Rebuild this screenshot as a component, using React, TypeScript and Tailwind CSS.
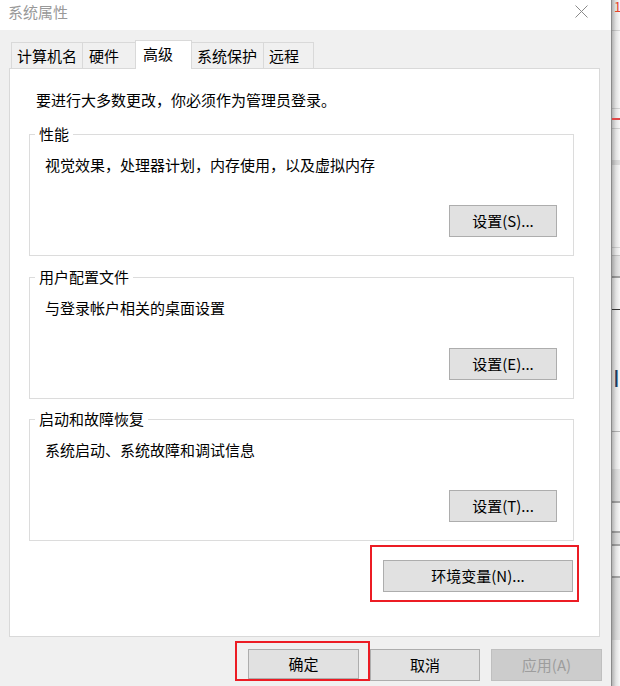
import React from "react";

function Btn({ children, className = "" }: { children: React.ReactNode; className?: string }) {
  return (
    <div
      className={`flex items-center justify-center bg-[#e1e1e1] border border-[#adadad] text-[15px] leading-[20px] text-black ${className}`}
    >
      {children}
    </div>
  );
}

function Group({
  title,
  desc,
  btn,
  className = "",
}: {
  title: string;
  desc: string;
  btn: string;
  className?: string;
}) {
  return (
    <fieldset className={`ml-[19px] w-[545px] border border-[#dcdcdc] ${className}`}>
      <legend className="ml-[5px] px-[4px] leading-[20px]">{title}</legend>
      <div className="mt-[11px] pl-[15px] leading-[20px]">{desc}</div>
      <div className="mt-[30px] mb-[18px] pr-[16px] flex justify-end">
        <Btn className="w-[108px] h-[32px]">{btn}</Btn>
      </div>
    </fieldset>
  );
}

function Tab({
  label,
  className,
}: {
  label: string;
  className: string;
}) {
  return <div className={`flex items-center leading-[20px] ${className}`}>{label}</div>;
}

function BackgroundStrip() {
  return (
    <div className="w-[9px] h-[686px] shrink-0 overflow-hidden border-l border-[#8a8a8a] bg-gradient-to-r from-[#b4b4b4] via-[#e2e2e2] to-[#f7f7f7] flex flex-col">
      <div className="h-[14px] pl-[2px] text-[13px] leading-[14px] text-[#e8432a] font-['Noto_Sans_CJK_SC',sans-serif] whitespace-nowrap">
        1钟
      </div>
      <div className="h-[16px]" />
      <div className="h-px bg-[#00000022]" />
      <div className="h-[77px]" />
      <div className="h-px bg-[#00000022]" />
      <div className="h-[9px]" />
      <div className="h-[2px] bg-[#e04848]" />
      <div className="h-[8px]" />
      <div className="h-px bg-[#00000022]" />
      <div className="h-[31px]" />
      <div className="h-[5px] bg-[#00000018]" />
      <div className="h-[82px]" />
      <div className="h-px bg-[#00000020]" />
      <div className="h-[7px]" />
      <div className="h-px bg-[#00000030]" />
      <div className="h-[20px] bg-[#00000010]" />
      <div className="h-[2px] bg-[#00000055]" />
      <div className="h-[31px]" />
      <div className="h-px bg-[#333333]" />
      <div className="h-[56px]" />
      <div className="h-[26px] pl-[1px] text-[24px] leading-[26px] text-[#1d3b5e] font-['Liberation_Sans',sans-serif] whitespace-nowrap">
        IC
      </div>
      <div className="h-[39px]" />
      <div className="h-px bg-[#00000040]" />
      <div className="h-[37px]" />
      <div className="h-[32px] bg-[#00000012]" />
      <div className="h-[2px] bg-[#00000050]" />
      <div className="h-[28px]" />
      <div className="h-[2px] bg-[#00000050]" />
      <div className="h-[11px] bg-[#00000012]" />
      <div className="h-[2px] bg-[#00000050]" />
      <div className="h-[30px]" />
      <div className="h-[2px] bg-[#00000050]" />
      <div className="h-[62px] bg-[#00000012]" />
    </div>
  );
}

export default function App() {
  return (
    <div className="w-[620px] h-[686px] overflow-hidden flex bg-white font-['Noto_Sans_CJK_SC','Microsoft_YaHei',sans-serif] text-[15px] text-black">
      <div className="w-[611px] h-[686px] shrink-0 flex flex-col bg-[#f0f0f0]">
        {/* Title bar */}
        <div className="h-[30px] bg-white flex items-start justify-between pl-[8px] pr-[23px]">
          <div className="pt-[2px] leading-[20px] text-[#999999]">系统属性</div>
          <svg width="13" height="13" viewBox="0 0 13 13" className="mt-[5px]">
            <path d="M0.5 0.5 L12.5 12.5 M12.5 0.5 L0.5 12.5" stroke="#8a8a8a" strokeWidth="1" fill="none" />
          </svg>
        </div>

        {/* Tabs */}
        <div className="pt-[10px] pl-[11px] h-[38px] flex items-end relative z-10">
          <Tab label="计算机名" className="w-[71px] h-[26px] pl-[5px] border-l border-t border-[#d9d9d9]" />
          <Tab label="硬件" className="w-[53px] h-[26px] pl-[6px] border-l border-t border-[#d9d9d9]" />
          <Tab
            label="高级"
            className="w-[57px] h-[29px] -mb-px pl-[7px] pb-[3px] bg-white border-l border-t border-r border-[#d9d9d9]"
          />
          <Tab label="系统保护" className="w-[71px] h-[26px] pl-[5px] border-t border-[#d9d9d9]" />
          <Tab label="远程" className="w-[51px] h-[26px] pl-[5px] border-l border-t border-r border-[#d9d9d9]" />
        </div>

        {/* Tab panel */}
        <div className="ml-[9px] w-[591px] h-[569px] shrink-0 bg-white border border-[#d9d9d9] flex flex-col">
          <div className="pt-[21px] pl-[26px] leading-[20px]">要进行大多数更改，你必须作为管理员登录。</div>
          <Group className="mt-[14px]" title="性能" desc="视觉效果，处理器计划，内存使用，以及虚拟内存" btn="设置(S)..." />
          <Group className="mt-[11px]" title="用户配置文件" desc="与登录帐户相关的桌面设置" btn="设置(E)..." />
          <Group className="mt-[10px]" title="启动和故障恢复" desc="系统启动、系统故障和调试信息" btn="设置(T)..." />
          <div className="mt-[4px] mr-[20px] self-end border-2 border-[#ec1c24] pl-[11px] pr-[4px] pt-[13px] pb-[8px]">
            <Btn className="w-[190px] h-[32px]">环境变量(N)...</Btn>
          </div>
        </div>

        {/* Bottom buttons */}
        <div className="mt-[4px] pr-[9px] flex justify-end items-start">
          <div className="border-2 border-[#ec1c24] pl-[11px] pr-[9px] pt-[6px]">
            <Btn className="w-[111px] h-[30px]">确定</Btn>
          </div>
          <Btn className="mt-[8px] w-[110px] h-[32px]">取消</Btn>
          <div className="ml-[11px] mt-[8px] w-[111px] h-[32px] flex items-center justify-center bg-[#cccccc] border border-[#bfbfbf] text-[#9d9d9d] leading-[20px]">
            应用(A)
          </div>
        </div>
      </div>
      <BackgroundStrip />
    </div>
  );
}
